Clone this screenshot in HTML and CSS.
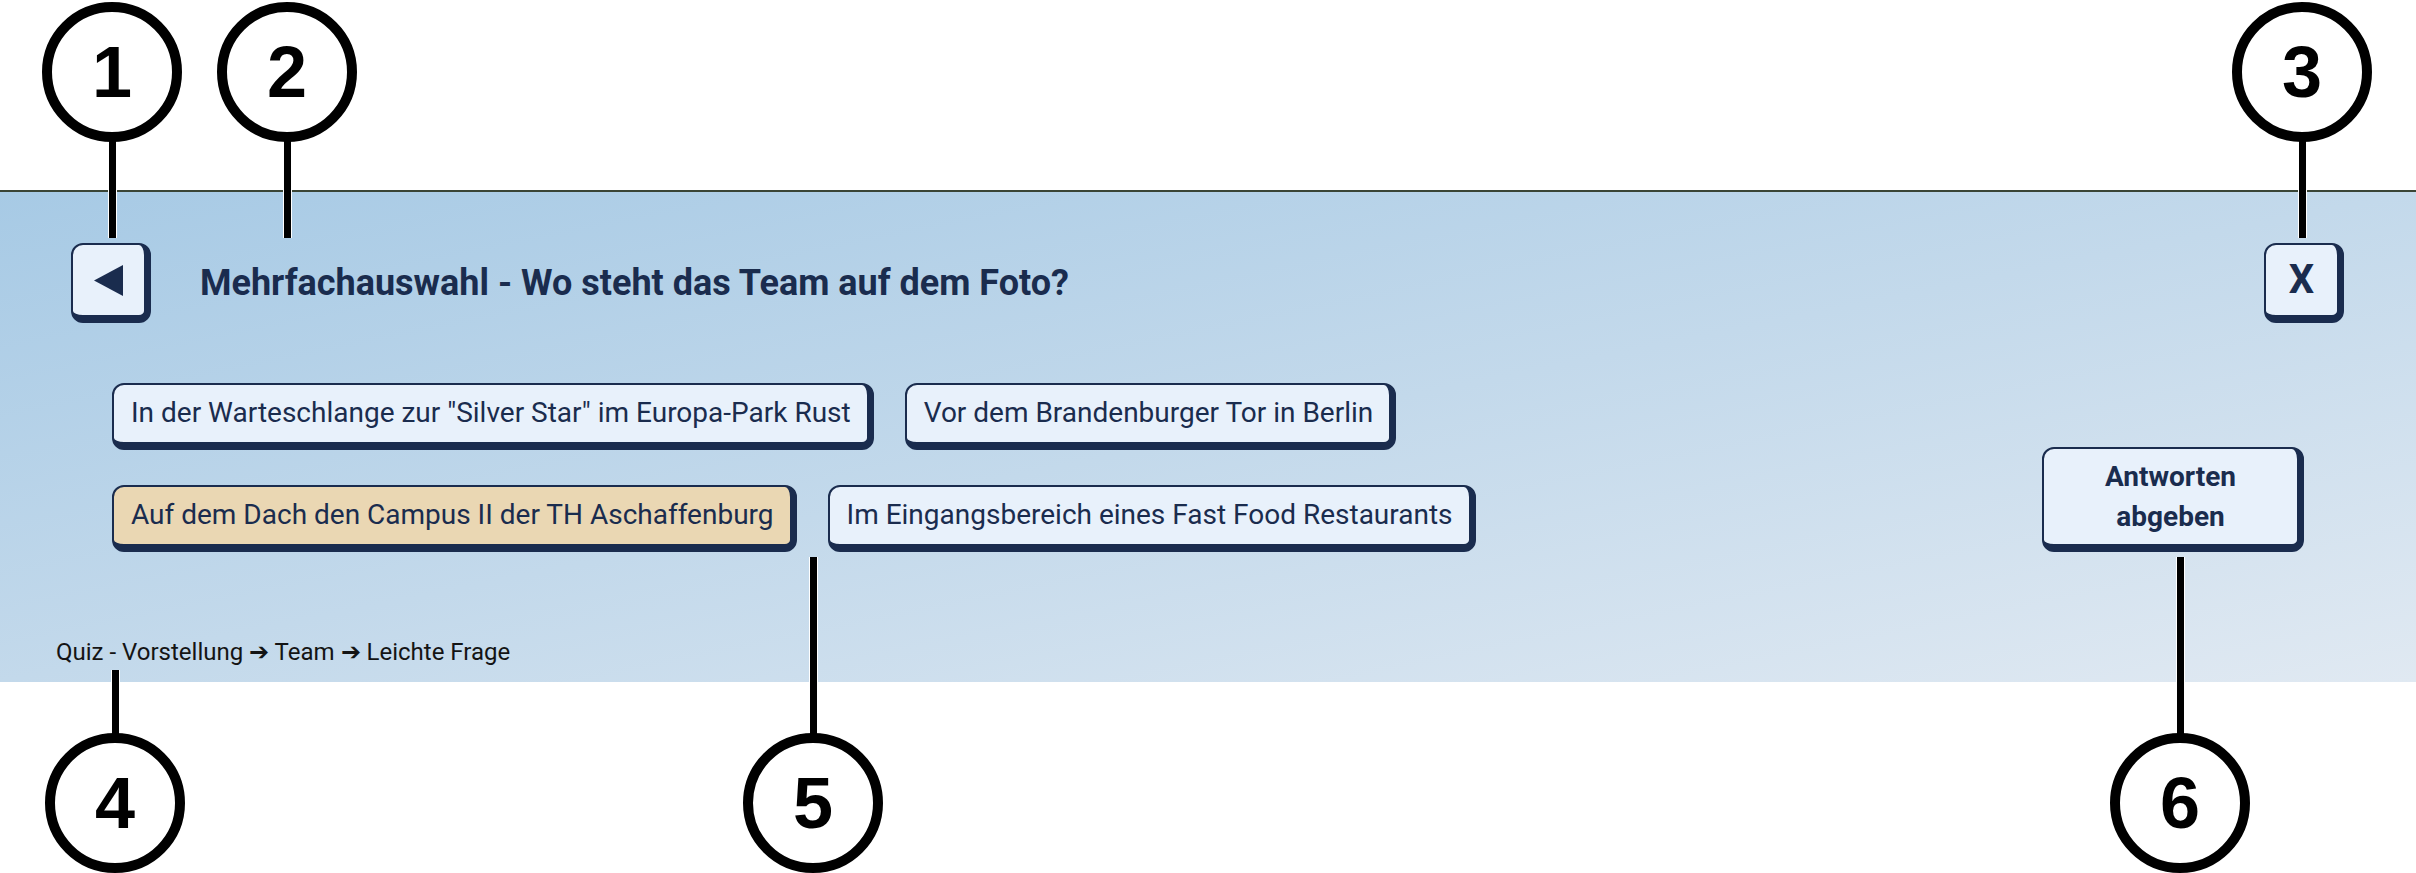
FILE: index.html
```html
<!DOCTYPE html>
<html lang="de">
<head>
<meta charset="utf-8">
<title>Quiz - Mehrfachauswahl</title>
<link rel="stylesheet" href="styles.css">
</head>
<body>
<div class="page">
  <section class="panel">
    <header class="bar">
      <button class="key square back" aria-label="Zurück">
        <svg width="29" height="31" viewBox="0 0 29 31"><polygon points="0,15.5 29,0 29,31" fill="#1a2c4e"/></svg>
      </button>
      <h1 class="title">Mehrfachauswahl - Wo steht das Team auf dem Foto?</h1>
      <button class="key square close">X</button>
    </header>
    <div class="body">
      <div class="answers">
        <div class="row">
          <button class="key answer">In der Warteschlange zur "Silver Star" im Europa-Park Rust</button>
          <button class="key answer">Vor dem Brandenburger Tor in Berlin</button>
        </div>
        <div class="row">
          <button class="key answer selected">Auf dem Dach den Campus II der TH Aschaffenburg</button>
          <button class="key answer">Im Eingangsbereich eines Fast Food Restaurants</button>
        </div>
      </div>
      <button class="key submit">Antworten abgeben</button>
    </div>
    <nav class="crumbs">Quiz - Vorstellung ➔ Team ➔ Leichte Frage</nav>
  </section>

  <div class="stem s1"></div>
  <div class="stem s2"></div>
  <div class="stem s3"></div>
  <div class="stem s4"></div>
  <div class="stem s5"></div>
  <div class="stem s6"></div>
  <div class="bubble b1">1</div>
  <div class="bubble b2">2</div>
  <div class="bubble b3">3</div>
  <div class="bubble b4">4</div>
  <div class="bubble b5">5</div>
  <div class="bubble b6">6</div>
</div>
</body>
</html>
```
FILE: styles.css
```css
html, body {
  margin: 0;
  padding: 0;
  background: #ffffff;
}

.page {
  position: relative;
  width: 2416px;
  height: 873px;
  overflow: hidden;
  font-family: Roboto, "Noto Sans", sans-serif;
}

.panel {
  margin-top: 190px;
  height: 492px;
  box-sizing: border-box;
  border-top: 2px solid #3a4536;
  background: linear-gradient(to bottom right, #a7cae5 0%, #c3d9eb 50%, #e0e9f2 100%);
  display: flex;
  flex-direction: column;
}

.bar {
  display: flex;
  align-items: center;
  margin-top: 51px;
  padding: 0 72px 0 71px;
}

.title {
  flex: 1;
  margin: 0 0 0 49px;
  font-size: 36px;
  font-weight: 700;
  color: #1a2c4e;
  line-height: 42px;
}

.key {
  box-sizing: border-box;
  background: #e8f1fb;
  border: 2px solid #1a2c4e;
  border-right-width: 7px;
  border-bottom-width: 8px;
  border-radius: 12px;
  color: #1a2c4e;
  font-family: Roboto, "Noto Sans", sans-serif;
  margin: 0;
  cursor: pointer;
}

.square {
  width: 80px;
  height: 80px;
  padding: 0;
  display: flex;
  align-items: center;
  justify-content: center;
  flex: none;
}

.back svg {
  display: block;
  margin-right: 1px;
}

.close {
  font-size: 40px;
  font-weight: 700;
  line-height: 1;
}

.body {
  display: flex;
  justify-content: space-between;
  align-items: flex-end;
  margin-top: 60px;
  padding: 0 112px;
}

.answers {
  display: flex;
  flex-direction: column;
  gap: 35px;
}

.row {
  display: flex;
  gap: 31px;
}

.answer {
  font-size: 28px;
  line-height: 32px;
  padding: 12px 16px 13px 17px;
  white-space: nowrap;
}

.answer.selected {
  background: #ead7b3;
}

.submit {
  width: 262px;
  padding: 8px 30px 7px;
  font-size: 28px;
  font-weight: 700;
  line-height: 40px;
  text-align: center;
}

.crumbs {
  margin-top: 86px;
  padding-left: 56px;
  font-size: 24px;
  line-height: 28px;
  color: #141414;
}

/* annotation callouts */
.bubble {
  position: absolute;
  width: 140px;
  height: 140px;
  box-sizing: border-box;
  border: 10px solid #000;
  border-radius: 50%;
  background: #fff;
  display: flex;
  align-items: center;
  justify-content: center;
  font-family: "Liberation Sans", Arial, sans-serif;
  font-weight: 700;
  font-size: 72px;
  line-height: 1;
  color: #000;
}

.b1 { left: 42px;   top: 2px; }
.b2 { left: 217px;  top: 2px; }
.b3 { left: 2232px; top: 2px; }
.b4 { left: 45px;   top: 733px; }
.b5 { left: 743px;  top: 733px; }
.b6 { left: 2110px; top: 733px; }

.stem {
  position: absolute;
  width: 7px;
  background: #000;
  border-left: 1px solid #fff;
  border-right: 1px solid #fff;
}

.s1 { left: 108px;  top: 140px; height: 98px; }
.s2 { left: 283px;  top: 140px; height: 98px; }
.s3 { left: 2298px; top: 140px; height: 98px; }
.s4 { left: 111px;  top: 670px; height: 66px; }
.s5 { left: 809px;  top: 557px; height: 179px; }
.s6 { left: 2176px; top: 557px; height: 179px; }
```
